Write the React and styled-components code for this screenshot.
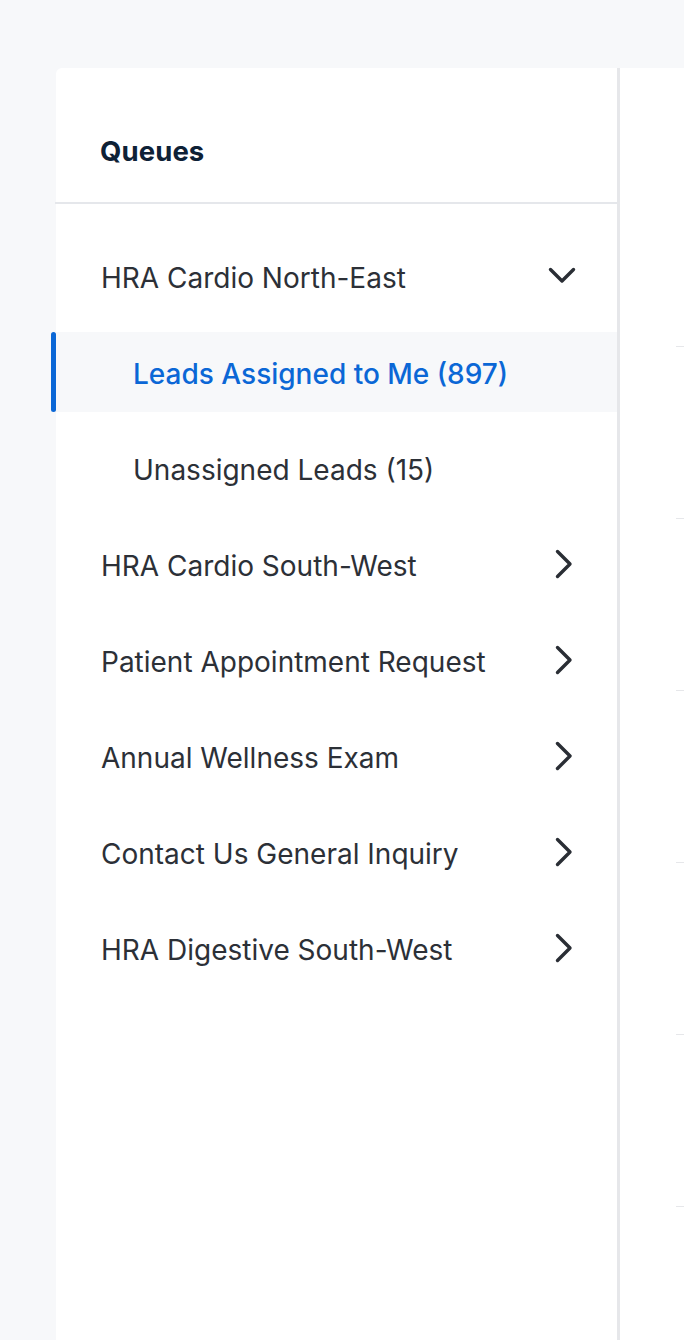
import React from "react";
import styled, { createGlobalStyle } from "styled-components";

const Global = createGlobalStyle`
  html, body { margin: 0; padding: 0; background: #f7f8fa; }
  body { font-family: Inter, "Noto Sans", sans-serif; -webkit-font-smoothing: antialiased; }
  * { box-sizing: border-box; }
`;

const Page = styled.div`
  min-height: 1340px;
  padding: 68px 0 0 56px;
  display: flex;
  overflow: hidden;
`;

const Card = styled.div`
  display: flex;
  flex: 1;
  background: #ffffff;
  border-top-left-radius: 6px;
  min-height: 1272px;
`;

const Sidebar = styled.aside`
  width: 564px;
  flex: none;
  border-right: 3px solid #e6e7ea;
  display: flex;
  flex-direction: column;
`;

const Header = styled.div`
  height: 136px;
  padding: 32px 45px 0;
  display: flex;
  align-items: center;
  border-bottom: 2px solid #e5e7eb;
  margin-left: -1px;
`;

const Title = styled.h2`
  margin: 0;
  font-size: 27.5px;
  font-weight: 700;
  color: #0e2136;
  letter-spacing: 0.1px;
`;

const List = styled.div`
  padding-top: 32px;
  display: flex;
  flex-direction: column;
  gap: 16px;
`;

const Row = styled.div`
  position: relative;
  height: 80px;
  display: flex;
  align-items: center;
  justify-content: space-between;
  padding: 3px 42px 0 ${(p) => (p.$sub ? 77 : 45)}px;
  font-size: 28px;
  font-weight: ${(p) => (p.$active ? 500 : 400)};
  color: ${(p) => (p.$active ? "#0b67d6" : "#2c3037")};
  background: ${(p) => (p.$active ? "#f7f8fa" : "transparent")};
  white-space: nowrap;
`;

const ActiveBar = styled.span`
  position: absolute;
  left: -5px;
  top: 0;
  bottom: 0;
  width: 5px;
  border-radius: 3px;
  background: #0b67d6;
`;

const Chevron = styled.svg`
  flex: none;
  color: #2a2e35;
  margin-top: -3px;
`;

const Content = styled.main`
  flex: 1;
  display: flex;
  flex-direction: column;
  padding-left: 56px;
  padding-top: 278px;
`;

const ContentRow = styled.div`
  height: 172px;
  border-top: 1px solid #e6e7ea;
  flex: none;
`;

const Down = () => (
  <Chevron width="28" height="18" viewBox="0 0 28 18" style={{ marginRight: -1 }}>
    <path d="M2.5 2.5 L14 14 L25.5 2.5" fill="none" stroke="currentColor" strokeWidth="3.4" strokeLinecap="round" strokeLinejoin="round" />
  </Chevron>
);

const Right = () => (
  <Chevron width="18" height="30" viewBox="0 0 18 30" style={{ marginRight: 2 }}>
    <path d="M2.5 2.5 L15 15 L2.5 27.5" fill="none" stroke="currentColor" strokeWidth="3.4" strokeLinecap="round" strokeLinejoin="round" />
  </Chevron>
);

const groups = [
  "HRA Cardio South-West",
  "Patient Appointment Request",
  "Annual Wellness Exam",
  "Contact Us General Inquiry",
  "HRA Digestive South-West",
];

export default function App() {
  return (
    <>
      <Global />
      <Page>
        <Card>
          <Sidebar>
            <Header>
              <Title>Queues</Title>
            </Header>
            <List>
              <Row>
                <span>HRA Cardio North-East</span>
                <Down />
              </Row>
              <Row $sub $active>
                <ActiveBar />
                <span>Leads Assigned to Me (897)</span>
              </Row>
              <Row $sub>
                <span>Unassigned Leads (15)</span>
              </Row>
              {groups.map((g) => (
                <Row key={g}>
                  <span>{g}</span>
                  <Right />
                </Row>
              ))}
            </List>
          </Sidebar>
          <Content>
            {[0, 1, 2, 3, 4, 5].map((i) => (
              <ContentRow key={i} />
            ))}
          </Content>
        </Card>
      </Page>
    </>
  );
}
